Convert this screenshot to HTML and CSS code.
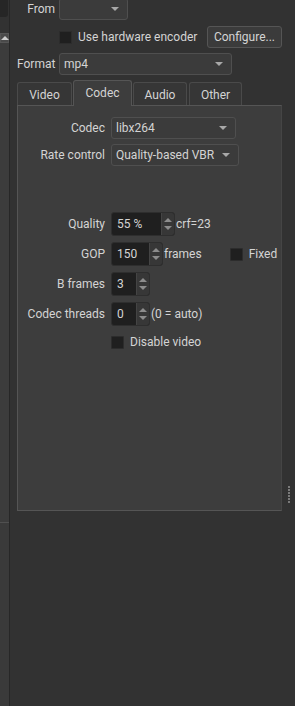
FILE: index.html
```html
<!DOCTYPE html>
<html lang="en">
<head>
  <meta charset="UTF-8">
  <title>Export</title>
  <link rel="stylesheet" href="styles.css">
</head>
<body>
  <div class="window">

    <!-- left scrollbar remnant -->
    <div class="strip">
      <div class="strip-box"></div>
      <div class="strip-up"><span class="tri-up"></span></div>
      <div class="strip-handle"></div>
      <div class="strip-track"></div>
    </div>

    <div class="main">
      <div class="form-row from-row">
        <label class="lbl">From</label>
        <div class="combo from-combo"><span class="combo-text"></span><span class="arrow"></span></div>
      </div>

      <div class="form-row hw-row">
        <span></span>
        <div class="hw-line">
          <span class="check"></span>
          <span class="check-text">Use hardware encoder</span>
          <button class="btn">Configure...</button>
        </div>
      </div>

      <div class="form-row format-row">
        <label class="lbl">Format</label>
        <div class="combo format-combo"><span class="combo-text">mp4</span><span class="arrow"></span></div>
      </div>

      <div class="tabs">
        <div class="tab">Video</div>
        <div class="tab active">Codec</div>
        <div class="tab">Audio</div>
        <div class="tab">Other</div>
      </div>

      <div class="panel">
        <div class="prow codec-row">
          <label class="plbl">Codec</label>
          <div class="combo codec-combo"><span class="combo-text">libx264</span><span class="arrow"></span></div>
        </div>
        <div class="prow rate-row">
          <label class="plbl">Rate control</label>
          <div class="combo rate-combo"><span class="combo-text">Quality-based VBR</span><span class="arrow"></span></div>
        </div>
        <div class="prow quality-row">
          <label class="plbl">Quality</label>
          <div class="field">
            <div class="spin quality-spin"><span class="spin-text">55 %</span><span class="spin-btns"><span class="tri-up"></span><span class="tri-down"></span></span></div>
            <span class="suffix">crf=23</span>
          </div>
        </div>
        <div class="prow spin-row">
          <label class="plbl">GOP</label>
          <div class="field">
            <div class="spin gop-spin"><span class="spin-text">150</span><span class="spin-btns"><span class="tri-up"></span><span class="tri-down"></span></span></div>
            <span class="suffix">frames</span>
            <span class="check fixed-check"></span>
            <span class="check-text">Fixed</span>
          </div>
        </div>
        <div class="prow spin-row">
          <label class="plbl">B frames</label>
          <div class="field">
            <div class="spin small-spin"><span class="spin-text">3</span><span class="spin-btns"><span class="tri-up"></span><span class="tri-down"></span></span></div>
          </div>
        </div>
        <div class="prow spin-row">
          <label class="plbl">Codec threads</label>
          <div class="field">
            <div class="spin small-spin"><span class="spin-text">0</span><span class="spin-btns"><span class="tri-up"></span><span class="tri-down"></span></span></div>
            <span class="suffix">(0 = auto)</span>
          </div>
        </div>
        <div class="prow disable-row">
          <span></span>
          <div class="field">
            <span class="check"></span>
            <span class="check-text">Disable video</span>
          </div>
        </div>
      </div>
    </div>

    <div class="splitter">
      <div class="grip"><i></i><i></i><i></i><i></i><i></i><i></i></div>
    </div>
  </div>
</body>
</html>
```

FILE: styles.css
```css
* { margin: 0; padding: 0; box-sizing: border-box; }
body {
  font-family: Roboto, "Liberation Sans", sans-serif;
  font-size: 12px;
  color: #d4d4d4;
  background-color: #323232;
  overflow: hidden;
}

.window {
  display: flex;
  width: 295px;
  height: 706px;
}

/* left strip */
.strip {
  width: 10px;
  border-right: 1px solid #272727;
  display: flex;
  flex-direction: column;
}
.strip-box {
  width: 8px;
  height: 17px;
  background-color: #262626;
  border-radius: 0 0 3px 0;
}
.strip-up {
  margin-top: 16px;
  width: 9px;
  height: 10px;
  background-color: #4a4a4a;
  border: 1px solid #555;
  display: flex;
  align-items: center;
  justify-content: center;
}
.strip-up .tri-up { border-bottom-color: #ccc; }
.strip-handle {
  height: 480px;
  background-color: #3c3c3c;
  border-bottom: 1px solid #505050;
}
.strip-track { flex: 1; background-color: #3a3a3a; }

/* main column */
.main {
  width: 272px;
  padding-left: 7px;
  display: flex;
  flex-direction: column;
}

.form-row {
  display: grid;
  grid-template-columns: 38px 1fr;
  column-gap: 4px;
  align-items: center;
}
.lbl { text-align: right; }
.from-row { margin-top: -2px; }
.hw-row { margin-top: 6px; }
.format-row { margin-top: 5px; }

.combo {
  position: relative;
  height: 22px;
  background-color: #3b3b3b;
  border: 1px solid #4f4f4f;
  border-radius: 3px;
  display: flex;
  align-items: center;
  padding-left: 4px;
}
.arrow {
  position: absolute;
  right: 8px;
  top: 8px;
  width: 0;
  height: 0;
  border-left: 4px solid transparent;
  border-right: 4px solid transparent;
  border-top: 4px solid #a8a8a8;
}
.from-combo { width: 69px; }
.format-combo { width: 173px; }
.codec-combo { width: 125px; }
.rate-combo { width: 128px; }

.hw-line {
  display: flex;
  align-items: center;
}
.check {
  width: 13px;
  height: 13px;
  background-color: #1f1f1f;
  border: 1px solid #2c2c2c;
  border-radius: 1px;
  flex-shrink: 0;
}
.check-text { margin-left: 6px; }
.btn {
  margin-left: auto;
  width: 75px;
  height: 22px;
  font: inherit;
  color: #d4d4d4;
  background-color: #3b3b3b;
  border: 1px solid #555;
  border-radius: 3px;
}

/* tabs */
.tabs {
  margin-top: 5px;
  height: 25px;
  display: flex;
  align-items: flex-end;
  position: relative;
  z-index: 2;
}
.tab {
  height: 23px;
  padding: 0 11px;
  margin-right: 1px;
  background-color: #363636;
  border: 1px solid #4a4a4a;
  border-bottom: none;
  border-radius: 3px 3px 0 0;
  display: flex;
  align-items: center;
  justify-content: center;
  padding-top: 1px;
}
.tab:nth-child(1) { width: 55px; }
.tab:nth-child(3) { width: 54px; }
.tab:nth-child(4) { width: 53px; margin-left: 1px; }
.tab.active {
  width: 59px;
  height: 26px;
  margin-bottom: -1px;
  background-color: #3d3d3d;
  border-color: #555;
  padding-bottom: 2px;
}

/* tab panel */
.panel {
  height: 406px;
  background-color: #3d3d3d;
  border: 1px solid #555;
  border-right-color: #454545;
  padding: 11px 0 0 9px;
  display: flex;
  flex-direction: column;
}
.prow {
  display: grid;
  grid-template-columns: 78px 1fr;
  column-gap: 6px;
  align-items: center;
}
.plbl { text-align: right; }
.rate-row { margin-top: 5px; }
.quality-row { margin-top: 46px; }
.spin-row { margin-top: 6px; }
.disable-row { margin-top: 9px; }

.field {
  display: flex;
  align-items: center;
}
.spin {
  height: 24px;
  background-color: #1f1f1f;
  border: 1px solid #2e2e2e;
  border-radius: 3px;
  display: flex;
  align-items: center;
  justify-content: space-between;
  padding-left: 5px;
}
.quality-spin { width: 64px; }
.gop-spin { width: 52px; }
.small-spin { width: 39px; }
.spin-btns {
  width: 13px;
  height: 22px;
  background-color: #373737;
  border-left: 1px solid #444;
  border-radius: 0 2px 2px 0;
  display: flex;
  flex-direction: column;
  align-items: center;
  justify-content: space-evenly;
}
.suffix { margin-left: 1px; }
.fixed-check { margin-left: 28px; }

.tri-up, .tri-down {
  width: 0;
  height: 0;
  border-left: 4px solid transparent;
  border-right: 4px solid transparent;
}
.tri-up { border-bottom: 4px solid #8c8c8c; }
.tri-down { border-top: 4px solid #8c8c8c; }

/* splitter handle */
.splitter {
  width: 13px;
  display: flex;
  flex-direction: column;
  align-items: center;
}
.grip {
  margin-top: 486px;
  display: flex;
  flex-direction: column;
  gap: 1px;
}
.grip i {
  width: 2px;
  height: 2px;
  background-color: #7a7a7a;
}
```
